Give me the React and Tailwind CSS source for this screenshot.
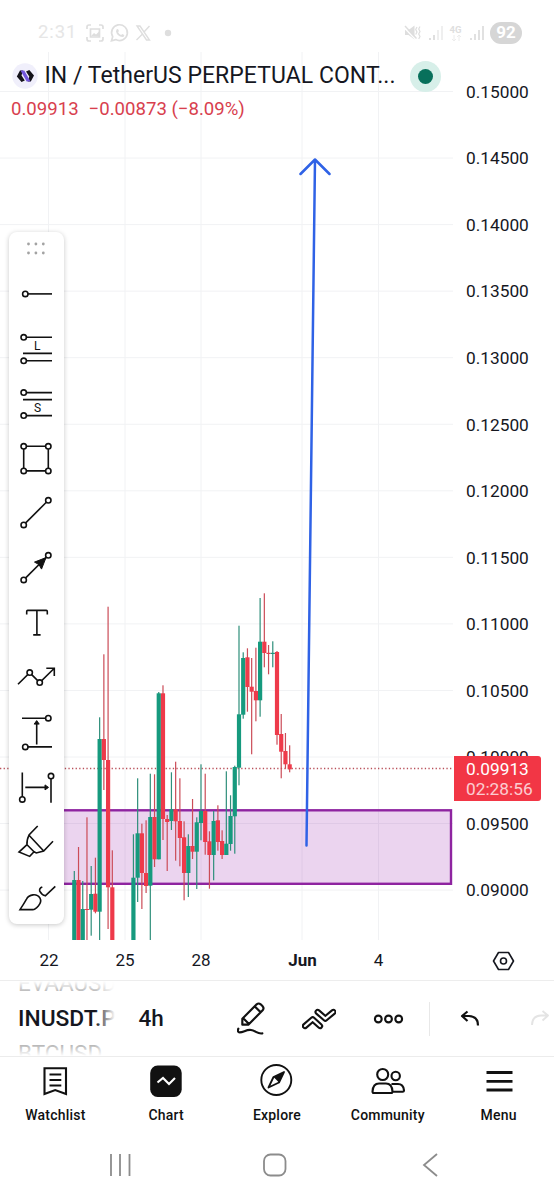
const UP = "#169a7e";
const DOWN = "#ee3a4a";

const PRICES = [
  "0.15000", "0.14500", "0.14000", "0.13500", "0.13000", "0.12500", "0.12000",
  "0.11500", "0.11000", "0.10500", "0.10000", "0.09500", "0.09000",
];

// slot, direction, high, low, body top, body bottom
const CANDLES = [
  [0, 1, 871, 940, 880, 940],
  [1, 0, 847, 940, 880, 940],
  [2, 1, 881, 940, 909, 940],
  [3, 0, 817.3, 940, 909, 910],
  [4, 1, 866, 935.7, 894, 909.7],
  [5, 0, 857.7, 913.3, 893.7, 911.7],
  [6, 1, 717.3, 940, 739, 911.7],
  [7, 0, 654.3, 790, 739, 760],
  [8, 0, 606.7, 929, 760, 887.3],
  [9, 0, 850.3, 940, 887.3, 940],
  [14, 1, 834.3, 940, 877.7, 940],
  [15, 1, 778.3, 902, 833.3, 877.7],
  [16, 0, 823.7, 909, 833.3, 873],
  [17, 0, 820.3, 893, 873, 886],
  [18, 1, 773.7, 940, 817, 885.7],
  [19, 0, 774.3, 867, 817, 859.3],
  [20, 1, 692, 859.3, 693.3, 859.3],
  [21, 0, 685.3, 840, 693.3, 819],
  [22, 0, 815, 871, 819, 822],
  [23, 1, 772.3, 830, 809.3, 821],
  [24, 0, 761.7, 860.7, 809.3, 821.3],
  [25, 0, 778.3, 866.3, 821, 838],
  [26, 0, 821.3, 900.3, 837.3, 873],
  [27, 1, 834.3, 897, 846, 873],
  [28, 0, 799, 859, 846, 851.7],
  [29, 1, 817.3, 889, 822.3, 851.7],
  [30, 1, 764.3, 840.3, 811, 823],
  [31, 0, 773.7, 854.7, 811, 842],
  [32, 0, 831.3, 888.7, 841.3, 855],
  [33, 1, 811, 880.3, 821, 855],
  [34, 0, 805.3, 850.7, 820.3, 842],
  [35, 0, 830.3, 859, 841, 855],
  [36, 1, 771.3, 855, 843.7, 855],
  [37, 1, 795.3, 850.7, 816, 844],
  [38, 1, 765.7, 853.7, 767, 816.3],
  [39, 1, 625.7, 785.3, 714.3, 767.7],
  [40, 1, 652.3, 718.7, 658, 714.7],
  [41, 0, 648.3, 711.7, 657.3, 687],
  [42, 0, 658, 754.3, 686.7, 691.7],
  [43, 0, 647.7, 721.3, 691, 700.3],
  [44, 1, 598, 716.7, 641.7, 700.3],
  [45, 0, 593.3, 667.3, 641.7, 653],
  [46, 0, 645, 674.3, 652.8, 654],
  [47, 1, 641.3, 667.3, 652.8, 654],
  [48, 0, 651, 744.7, 652, 735],
  [49, 0, 714, 778.3, 734, 751.7],
  [50, 0, 733, 768.7, 751, 764.3],
  [51, 0, 745.3, 772.3, 764.3, 769.3],
];

function StatusBar() {
  return (
    <div className="h-[52px] pt-3.5 pl-[38px] pr-[32px] flex items-center justify-between text-[#dedede]">
      <div className="flex items-center">
        <span className="w-[48px] text-[18.5px] tracking-[0.9px] text-[#e6e6e6]">2:31</span>
        <svg width="88" height="20" viewBox="0 0 88 20" fill="none" stroke="currentColor" strokeWidth="1.7">
          <path d="M1 6V4q0-2 2-2h2M13 2h2q2 0 2 2v2M17 14v2q0 2-2 2h-2M5 18H3q-2 0-2-2v-2" />
          <path d="M4.5 6h9v8h-9z" />
          <path d="M5 13l3-3 2 1.500 3-3v5z" fill="currentColor" stroke="none" />
          <path d="M25.500 17.700l1.200-4a7.900 7.900 0 1 1 3 2.900z" />
          <path d="M30.500 6.500q1-1.200 1.800 0l.6 1.500-.8 1.200q1 2 3 2.800l1.200-1 2 1q.3 1.800-1.800 2-5.400-.6-6.500-5.500z" fill="currentColor" stroke="none" />
          <path d="M51 3h3l9.500 14h-3zM63.500 3l-5.500 6M56 11.500L50.500 17" strokeWidth="1.4" />
          <circle cx="82" cy="10" r="3.200" fill="currentColor" stroke="none" />
        </svg>
      </div>
      <div className="flex items-center">
        <svg width="80" height="22" viewBox="0 0 80 22" fill="none" stroke="currentColor" strokeWidth="1.500">
          <path d="M1 8h3.500l6-4.500v14l-6-4.500H1z" fill="currentColor" stroke="none" />
          <path d="M0 5.500L12 18" stroke="#fff" strokeWidth="1.300" />
          <path d="M1 4L12.500 16.500" strokeWidth="1.400" />
          <path d="M13 5l-1.300 2.500 1.300 2.500-1.300 2.500M16 4.500l-1.300 2.500 1.300 2.500-1.300 2.500 1.300 2.500-1.300 2.500" strokeWidth="1.200" />
          <path d="M26 18v-2M30 18v-5" strokeWidth="1.900" />
          <path d="M34 18V8M38 18V4" strokeWidth="1.900" stroke="#efefef" />
          <text x="45.500" y="10.500" fontSize="9.500" fontWeight="700" fill="currentColor" stroke="none">4G</text>
          <path d="M50 13v6m-2-2l2 2 2-2M55 19v-6m-2 2l2-2 2 2" stroke="#ececec" strokeWidth="1" />
          <path d="M67 18v-2M71 18v-6M75 18V8M79 18V4" strokeWidth="1.800" />
        </svg>
        <div className="ml-1.5 w-[32px] h-[22px] rounded-full bg-[#d6d6d6] text-white text-[17px] font-bold flex items-center justify-center">92</div>
      </div>
    </div>
  );
}

function Legend() {
  return (
    <div className="absolute left-0 top-0 pl-3 pt-[10px]">
      <div className="flex items-center h-[28px]">
        <svg width="26" height="26" viewBox="0 0 26 26">
          <circle cx="13" cy="13" r="12.700" fill="#f0effb" />
          <path d="M4.800 13.500L8 7.500H11L9.500 12.500L12.800 17.500L9.500 19Z" fill="#14131a" />
          <path d="M22 12.500L18.800 18.500H15.800L17.300 13.500L14 8.500L17.300 7Z" fill="#14131a" />
          <path d="M8.500 7.500H12.300L18.500 18.500H14.700Z" fill="#7256dc" />
        </svg>
        <div className="ml-[6.5px] w-[365.5px] text-[23px] text-[#15171f] whitespace-nowrap tracking-[0.04px]">IN / TetherUS PERPETUAL CONT...</div>
        <div className="w-[31px] h-[31px] rounded-full bg-[#d7efe9] flex items-center justify-center">
          <div className="w-[15px] h-[15px] rounded-full bg-[#08705b]" />
        </div>
      </div>
      <div className="mt-[6.5px] text-[18.6px] leading-6 text-[#d8404e] flex gap-[10px] -ml-px whitespace-nowrap">
        <span>0.09913</span>
        <span>−0.00873 (−8.09%)</span>
      </div>
    </div>
  );
}

function Chart() {
  return (
    <svg width="453" height="888" viewBox="0 52 453 888" className="block shrink-0">
      <g stroke="#f1f2f4" strokeWidth="1">
        {PRICES.map((p, i) => (
          <line key={p} x1="0" x2="453" y1={91.500 + i * 66.550} y2={91.500 + i * 66.550} />
        ))}
        {[48.500, 125, 201, 302, 378.500].map((x) => (
          <line key={x} x1={x} x2={x} y1="52" y2="940" />
        ))}
      </g>
      <rect x="20" y="810.300" width="431" height="73.500" fill="#9c27b0" fillOpacity="0.2" stroke="#8e24a0" strokeWidth="2.400" />
      <line x1="0" x2="453" y1="768.500" y2="768.500" stroke="#b9505a" strokeWidth="1.300" strokeDasharray="1.300 2.300" />
      {CANDLES.map(([slot, up, high, low, top, bottom]) => {
        const x = 74.300 + slot * 4.223;
        return (
          <g key={slot} fill={up ? UP : DOWN}>
            <rect x={x - 0.6} y={high} width="1.200" height={low - high} fill={up ? "#2f8f7b" : "#cb4c58"} />
            <rect x={x - 2.100} y={top} width="4.200" height={bottom - top} />
          </g>
        );
      })}
      <path d="M306.500 845.500L315 159.500M300.500 174L315 159.500L329.500 174" fill="none" stroke="#2f62e6" strokeWidth="2.500" strokeLinecap="round" strokeLinejoin="round" />
    </svg>
  );
}

function PriceAxis() {
  return (
    <div className="relative w-[101px] pt-[7.5px] text-[17.3px] text-[#15171f]">
      {PRICES.map((p) => (
        <div key={p} className="h-[66.55px] pl-[13px] flex items-center">{p}</div>
      ))}
      <div className="absolute left-px top-[704px] w-[86.500px] h-[45px] rounded-r-[3px] bg-[#f23645] text-white pl-3 pt-[3px] leading-[20px]">
        <div>0.09913</div>
        <div className="opacity-75">02:28:56</div>
      </div>
    </div>
  );
}

function TimeAxis() {
  return (
    <div className="h-[41px] pl-[11px] pt-[2px] flex items-center text-[17px] text-[#15171f] text-center border-b border-[#ededed]">
      <div className="w-[76px]">22</div>
      <div className="w-[76px]">25</div>
      <div className="w-[76px]">28</div>
      <div className="ml-[25.500px] w-[76px] font-bold">Jun</div>
      <div className="w-[76px]">4</div>
      <svg className="ml-[75.500px]" width="23" height="22" viewBox="0 0 23 22" fill="none" stroke="#15171f" strokeWidth="1.600">
        <path d="M6.500 2.500h10L21.500 11l-5 8.500h-10L1.500 11z" strokeLinejoin="round" />
        <circle cx="11.500" cy="11" r="3" />
      </svg>
    </div>
  );
}

function Node({ x, y }) {
  return <circle cx={x} cy={y} r="2.700" fill="#fff" />;
}

const TOOLS = [
  <>
    <path d="M-10.700 0.300H16" />
    <Node x={-10.700} y={0.300} />
  </>,
  <>
    <path d="M-12.300-11.300H16M-13 4.800H16M-12.300 12.200H16" />
    <Node x={-12.300} y={-11.300} />
    <Node x={-12.300} y={12.200} />
    <text x="1.300" y="1.200" textAnchor="middle" fontSize="12" fill="#111" stroke="none">L</text>
  </>,
  <>
    <path d="M-12.300-11H16M-13-4H16M-12.300 12H16" />
    <Node x={-12.300} y={-11} />
    <Node x={-12.300} y={12} />
    <text x="1.500" y="8.300" textAnchor="middle" fontSize="12" fill="#111" stroke="none">S</text>
  </>,
  <>
    <path d="M-12.300-12.300H12.300V12.300H-12.300Z" />
    <Node x={-12.300} y={-12.300} />
    <Node x={12.300} y={-12.300} />
    <Node x={-12.300} y={12.300} />
    <Node x={12.300} y={12.300} />
  </>,
  <>
    <path d="M-12.300 12.300L12.300-12.300" />
    <Node x={-12.300} y={12.300} />
    <Node x={12.300} y={-12.300} />
  </>,
  <>
    <path d="M-12.300 12.300L12.300-12.300" />
    <path d="M10-10L5.500 1.500L3-3L-1.500-5.500Z" fill="#111" strokeWidth="1" />
    <Node x={-12.300} y={12.300} />
    <Node x={12.300} y={-12.300} />
  </>,
  <path d="M-9.300-8v-3.200q0-1 1-1h18.600q1 0 1 1v3.200M.9-12.200V12.200M-2.800 12.300H4.600" />,
  <>
    <path d="M-18 6.700L-6.300-5L3.700 5L18.300-9.300M10.300-9.300H18.300V-1.700" />
    <Node x={-6.300} y={-5} />
    <Node x={3.700} y={5} />
  </>,
  <>
    <path d="M-14-13.400H12.300M-10.700 15.300H16M.7 13V-9" />
    <path d="M.7-11L3.200-7.500H-1.800Z" fill="#111" strokeWidth="1" />
    <Node x={12.300} y={-13.400} />
    <Node x={-10.700} y={15.300} />
  </>,
  <>
    <path d="M-13.700-14.200V12.800M15-10.500V16.200M-10.700.8H10" />
    <path d="M12.500.8L9-1.700V3.300Z" fill="#111" strokeWidth="1" />
    <Node x={-13.700} y={12.800} />
    <Node x={15} y={-10.500} />
  </>,
  <path d="M1.700-15.600L-7-6.600Q-9.500-1-9 3.100L-17 10.500L-6.300 14.800L-2 10.100L-9 3.100M-7-6.400L7.700 9.400M-2 10.100L.3 11.400L7.700 9.400L17-.3" />,
  <path d="M-16 13Q-12 7-9.500 2.500C-7-2.500 1-3.500 4 1.500C7 7-1 13-3.300 13ZM6.300-9.700Q3-8.500 3.700-5.500Q6-1.500 9.300-.8L19.300-10.300" />,
];

function DrawingTools() {
  return (
    <div className="absolute left-[9px] top-[232px] w-[54.500px] h-[692px] rounded-lg bg-white shadow-[0_1px_5px_rgba(0,0,0,0.22)]">
      <div className="h-[34.400px] w-[54px] flex items-center justify-center">
        <svg width="20" height="14" viewBox="0 0 20 14" fill="#a3a3a3">
          {[2.500, 9.900, 17.300].map((x) => (
            <g key={x}>
              <circle cx={x} cy="2" r="1.400" />
              <circle cx={x} cy="11" r="1.400" />
            </g>
          ))}
        </svg>
      </div>
      {TOOLS.map((tool, i) => (
        <svg key={i} className="block w-[54px] h-[54.750px]" viewBox="-27 -27.600 54 54.750" fill="none" stroke="#111" strokeWidth="1.600">
          {tool}
        </svg>
      ))}
    </div>
  );
}

function ActionBar() {
  return (
    <div className="relative h-[76px] flex items-center border-b border-[#ececec] text-[#15171f]">
      <div className="w-[97px] ml-[18px] h-[75px] overflow-hidden relative flex flex-col justify-center leading-[35px] whitespace-nowrap">
        <div className="text-[22.500px] text-[#b0b0b0]">EVAAUSDT</div>
        <div className="text-[22.800px] font-medium">INUSDT.P</div>
        <div className="text-[22.500px] text-[#b0b0b0]">BTCUSD</div>
        <div className="absolute inset-x-0 top-0 h-3 bg-linear-to-b from-white to-transparent" />
        <div className="absolute inset-x-0 bottom-0 h-3 bg-linear-to-t from-white to-transparent" />
        <div className="absolute inset-y-0 right-0 w-5 bg-linear-to-l from-white to-transparent" />
      </div>
      <div className="ml-[23.500px] w-[98.500px] text-[22.500px] font-medium">4h</div>
      <svg width="28" height="33" viewBox="0 0 84 99" fill="none" stroke="#111" strokeWidth="6.500" strokeLinejoin="round" strokeLinecap="round">
        <path d="M16 50L59 7Q65 2 71 7L77 13Q82 19 77 25L34 68H16ZM18 48L36 66M53 13L71 31" />
        <path d="M4 80Q0 91 8 91C20 91 28 82 42 84C56 86 62 97 76 94" />
      </svg>
      <svg className="ml-[37px]" width="34" height="22" viewBox="75 109 102 66" fill="none" strokeLinecap="round" strokeLinejoin="round">
        <path d="M84 163L107 143L129 163M122 121L145 141L169 121" stroke="#111" strokeWidth="19" />
        <path d="M84 163L107 143L129 163M122 121L145 141L169 121" stroke="#fff" strokeWidth="6.500" />
      </svg>
      <svg className="ml-[37px]" width="31" height="10" viewBox="0 0 31 10" fill="none" stroke="#111" strokeWidth="2.100">
        <circle cx="5.300" cy="5" r="3.400" />
        <circle cx="15.500" cy="5" r="3.400" />
        <circle cx="25.700" cy="5" r="3.400" />
      </svg>
      <div className="ml-[25px] w-px h-[34px] bg-[#e8e8e8]" />
      <svg className="ml-[30px]" width="20" height="17" viewBox="0 0 20 17" fill="none" stroke="#111" strokeWidth="2.200" strokeLinejoin="round">
        <path d="M7.500 1.500L2 6L7.500 11M2 6H9Q18 6.500 18 15.500" />
      </svg>
      <svg className="ml-[50px]" width="20" height="17" viewBox="0 0 20 17" fill="none" stroke="#e4e4e4" strokeWidth="1.900" strokeLinejoin="round">
        <path d="M12.500 1L18 5.500L12.500 10.500M18 5.500H11Q2 6 2 15" />
      </svg>
    </div>
  );
}

const TABS = [
  {
    label: "Watchlist",
    icon: <path d="M6.500 4.200H28V30L17.200 26L6.500 30ZM11.500 10.500H23.300M11.500 16H23.300M11.500 21.500H23.300" />,
  },
  {
    label: "Chart",
    icon: (
      <>
        <rect x="1.200" y="1.500" width="31.500" height="31.500" rx="7.500" fill="#111" stroke="none" />
        <path d="M8.500 18.500L14 14L20 20L26 14" stroke="#fff" />
      </>
    ),
  },
  {
    label: "Explore",
    icon: (
      <>
        <circle cx="16.300" cy="16" r="15" strokeWidth="1.900" />
        <path d="M24 8L19 18.500L8.500 23.500L13.500 13Z" strokeWidth="1.800" strokeLinejoin="round" />
        <path d="M24 8L19 18.500L13.500 13Z" fill="#111" stroke="none" />
      </>
    ),
  },
  {
    label: "Community",
    icon: (
      <>
        <circle cx="11.700" cy="10.500" r="5.500" />
        <circle cx="24.700" cy="12" r="4.200" />
        <path d="M1.500 27.500Q2 19.500 8 19.500H15Q21 19.500 21.500 27.500Q21.500 29 20 29H3Q1.500 29 1.500 27.500ZM20.500 20H27Q32.500 20 33 26.500Q33 27.700 31.800 27.700H21.500" />
      </>
    ),
  },
  {
    label: "Menu",
    icon: <path d="M4.500 8.500H30.500M4.500 17.300H30.500M4.500 26H30.500" strokeWidth="2.800" />,
  },
];

function TabBar() {
  return (
    <div className="h-[75px] pt-[7px] grid grid-cols-5">
      {TABS.map(({ label, icon }) => (
        <div key={label} className="flex flex-col items-center">
          <svg width="34" height="34" viewBox="0 0 34 34" fill="none" stroke="#111" strokeWidth="2.100">
            {icon}
          </svg>
          <div className="mt-[7px] text-[14px] leading-5 font-medium tracking-[0.2px] text-[#111]">{label}</div>
        </div>
      ))}
    </div>
  );
}

function SystemNav() {
  return (
    <div className="h-[68px] pl-[108px] pt-[21px] flex items-start">
      <svg width="24" height="24" viewBox="0 0 24 24" stroke="#8c8c8c" strokeWidth="1.800">
        <path d="M3 1v22M12 1v22M21.500 1v22" />
      </svg>
      <svg className="ml-[130px]" width="25" height="24" viewBox="0 0 25 24" fill="none" stroke="#8c8c8c" strokeWidth="1.800">
        <rect x="2" y="1.500" width="21.500" height="21" rx="6.500" />
      </svg>
      <svg className="ml-[134px]" width="20" height="24" viewBox="0 0 20 24" fill="none" stroke="#8c8c8c" strokeWidth="1.800">
        <path d="M16 1L3 12L16 23" />
      </svg>
    </div>
  );
}

export default function App() {
  return (
    <div className="relative w-[554px] h-[1200px] overflow-hidden bg-white font-[Roboto,sans-serif]">
      <StatusBar />
      <div className="relative flex h-[888px]">
        <Chart />
        <PriceAxis />
        <Legend />
      </div>
      <TimeAxis />
      <ActionBar />
      <TabBar />
      <SystemNav />
      <DrawingTools />
    </div>
  );
}
